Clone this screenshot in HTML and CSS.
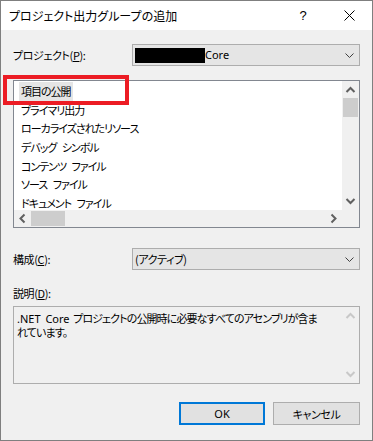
FILE: index.html
```html
<!DOCTYPE html>
<html lang="ja">

<head>
  <meta charset="UTF-8">
  <title>プロジェクト出力グループの追加</title>
  <link rel="stylesheet" href="styles.css">
</head>

<body>
  <div class="window">
    <!-- タイトルバー -->
    <div class="titlebar">
      <span class="title">プロジェクト出力グループの追加</span>
      <span class="cap-btn help">?</span>
      <span class="cap-btn close">
        <svg width="11" height="11" viewBox="0 0 11 11"><path d="M0.5 0.5 L10.5 10.5 M10.5 0.5 L0.5 10.5" stroke="#000" stroke-width="1" fill="none"/></svg>
      </span>
    </div>

    <div class="content">
      <!-- プロジェクト -->
      <div class="field">
        <label>プロジェクト(<u>P</u>):</label>
        <div class="combo">
          <span class="redact"></span><span class="latin">Core</span>
          <svg class="chev" width="9" height="5" viewBox="0 0 9 5"><path d="M0.5 0.5 L4.5 4.5 L8.5 0.5" fill="none" stroke="#404040" stroke-width="1"/></svg>
        </div>
      </div>

      <!-- 出力グループ一覧 -->
      <div class="listbox">
        <div class="list-main">
          <ul class="items">
            <li class="selected">項目の公開</li>
            <li>プライマリ出力</li>
            <li>ローカライズされたリソース</li>
            <li>デバッグ シンボル</li>
            <li>コンテンツ ファイル</li>
            <li>ソース ファイル</li>
            <li>ドキュメント ファイル</li>
          </ul>
          <div class="vscroll">
            <span class="arrow">
              <svg width="17" height="17" viewBox="0 0 17 17"><path d="M4.5 11 L8.5 7 L12.5 11" fill="none" stroke="#606060" stroke-width="2"/></svg>
            </span>
            <span class="vthumb"></span>
            <span class="vspace"></span>
            <span class="arrow">
              <svg width="17" height="17" viewBox="0 0 17 17"><path d="M4.5 6 L8.5 10 L12.5 6" fill="none" stroke="#606060" stroke-width="2"/></svg>
            </span>
          </div>
        </div>
        <div class="hscroll-row">
          <div class="hscroll">
            <span class="arrow">
              <svg width="17" height="17" viewBox="0 0 17 17"><path d="M10.5 4.5 L6.5 8.5 L10.5 12.5" fill="none" stroke="#606060" stroke-width="2"/></svg>
            </span>
            <span class="hthumb"></span>
            <span class="hspace"></span>
            <span class="arrow">
              <svg width="17" height="17" viewBox="0 0 17 17"><path d="M6.5 4.5 L10.5 8.5 L6.5 12.5" fill="none" stroke="#606060" stroke-width="2"/></svg>
            </span>
          </div>
          <div class="corner"></div>
        </div>
      </div>

      <!-- 構成 -->
      <div class="field config">
        <label>構成(<u>C</u>):</label>
        <div class="combo">
          <span>(アクティブ)</span>
          <svg class="chev" width="9" height="5" viewBox="0 0 9 5"><path d="M0.5 0.5 L4.5 4.5 L8.5 0.5" fill="none" stroke="#404040" stroke-width="1"/></svg>
        </div>
      </div>

      <!-- 説明 -->
      <div class="desc-label">説明(<u>D</u>):</div>
      <div class="desc">
        <p class="desc-text"><span class="latin">.NET Core</span> プロジェクトの公開時に必要なすべてのアセンブリが含ま<br>れています。</p>
        <div class="vscroll disabled">
          <span class="arrow">
            <svg width="17" height="17" viewBox="0 0 17 17"><path d="M4.5 11 L8.5 7 L12.5 11" fill="none" stroke="#c8c8c8" stroke-width="2"/></svg>
          </span>
          <span class="vspace"></span>
          <span class="arrow">
            <svg width="17" height="17" viewBox="0 0 17 17"><path d="M4.5 6 L8.5 10 L12.5 6" fill="none" stroke="#c8c8c8" stroke-width="2"/></svg>
          </span>
        </div>
      </div>

      <!-- ボタン -->
      <div class="buttons">
        <button class="btn btn-ok">OK</button>
        <button class="btn btn-cancel">キャンセル</button>
      </div>
    </div>

    <!-- 赤枠の注記 -->
    <div class="mark"></div>
  </div>
</body>

</html>
```

FILE: styles.css
```css
* {
  margin: 0;
  padding: 0;
  box-sizing: border-box;
}

body {
  font-family: "Noto Sans CJK JP", "Noto Sans", sans-serif;
  font-size: 11px;
  font-feature-settings: "palt";
  letter-spacing: -0.4px;
  color: #000;
  background: #fff;
}

ul {
  list-style: none
}

.window {
  position: relative;
  width: 373px;
  height: 441px;
  border: 1px solid #7f7f7f;
  background-color: #f0f0f0;
}

/* タイトルバー */
.titlebar {
  height: 29px;
  background-color: #fff;
  display: flex;
  align-items: center;
}

.title {
  flex: 1;
  padding-left: 8px;
  font-size: 12px;
  letter-spacing: 0;
  line-height: 29px;
}

.cap-btn {
  width: 46px;
  height: 29px;
  display: flex;
  align-items: center;
  justify-content: center;
}

.help {
  font-family: "Liberation Sans", sans-serif;
  font-size: 13px;
}

/* 本体 */
.content {
  padding: 14px 12px 0 12px;
}

.field {
  display: grid;
  grid-template-columns: 119px 1fr;
  align-items: center;
  height: 22px;
}

.field label {
  line-height: 16px;
}

.config {
  margin-top: 20px;
}

.combo {
  height: 22px;
  border: 1px solid #adadad;
  background-color: #e5e5e5;
  display: flex;
  align-items: center;
  padding-left: 2px;
  line-height: 16px;
}

.combo .chev {
  margin-left: auto;
  margin-right: 5px;
}

.redact {
  display: inline-block;
  width: 70px;
  height: 15px;
  background-color: #000;
}

.latin {
  font-family: "Noto Sans", sans-serif;
  font-size: 11px;
  letter-spacing: 0;
}

/* リストボックス */
.listbox {
  margin-top: 14px;
  height: 148px;
  border: 1px solid #828790;
  background-color: #fff;
  display: flex;
  flex-direction: column;
}

.list-main {
  flex: 1;
  display: flex;
  min-height: 0;
}

.items {
  flex: 1;
  min-width: 0;
  overflow: hidden;
  padding-top: 1px;
  padding-left: 5px;
}

.items li {
  width: fit-content;
  padding: 0 2px;
  line-height: 18.67px;
  letter-spacing: -1px;
  word-spacing: 4px;
  white-space: nowrap;
}

.items li.selected {
  background-color: #e5e5e5;
}

.vscroll {
  width: 17px;
  flex: none;
  background-color: #f0f0f0;
  display: flex;
  flex-direction: column;
}

.arrow {
  width: 17px;
  height: 17px;
  flex: none;
  display: block;
}

.arrow svg {
  display: block;
}

.vthumb {
  height: 19px;
  margin: 0 1px;
  background-color: #cdcdcd;
}

.vspace,
.hspace {
  flex: 1;
}

.hscroll-row {
  height: 17px;
  display: flex;
  background-color: #f0f0f0;
}

.hscroll {
  flex: 1;
  display: flex;
}

.hthumb {
  width: 34px;
  margin: 1px 0;
  background-color: #cdcdcd;
}

.corner {
  width: 17px;
}

/* 説明 */
.desc-label {
  margin-top: 15px;
  line-height: 16px;
}

.desc {
  margin-top: 5px;
  height: 78px;
  border: 1px solid #adadad;
  display: flex;
}

.desc-text {
  flex: 1;
  min-width: 0;
  padding: 5px 0 0 3px;
  line-height: 13.5px;
  letter-spacing: -0.9px;
  word-spacing: 2px;
  white-space: nowrap;
  overflow: hidden;
}

/* ボタン */
.buttons {
  margin-top: 18px;
  display: flex;
  justify-content: flex-end;
  gap: 8px;
}

.btn {
  height: 23px;
  font-family: inherit;
  font-size: 11px;
  font-feature-settings: "palt";
  letter-spacing: -0.4px;
  background-color: #e1e1e1;
  border: 1px solid #adadad;
}

.btn-ok {
  width: 86px;
  border: 2px solid #0078d7;
  font-family: "Noto Sans", sans-serif;
  letter-spacing: 0;
}

.btn-cancel {
  width: 87px;
}

/* 赤枠 */
.mark {
  position: absolute;
  left: 2px;
  top: 74px;
  width: 126px;
  height: 30px;
  border: 4px solid #ec1c24;
}
```
